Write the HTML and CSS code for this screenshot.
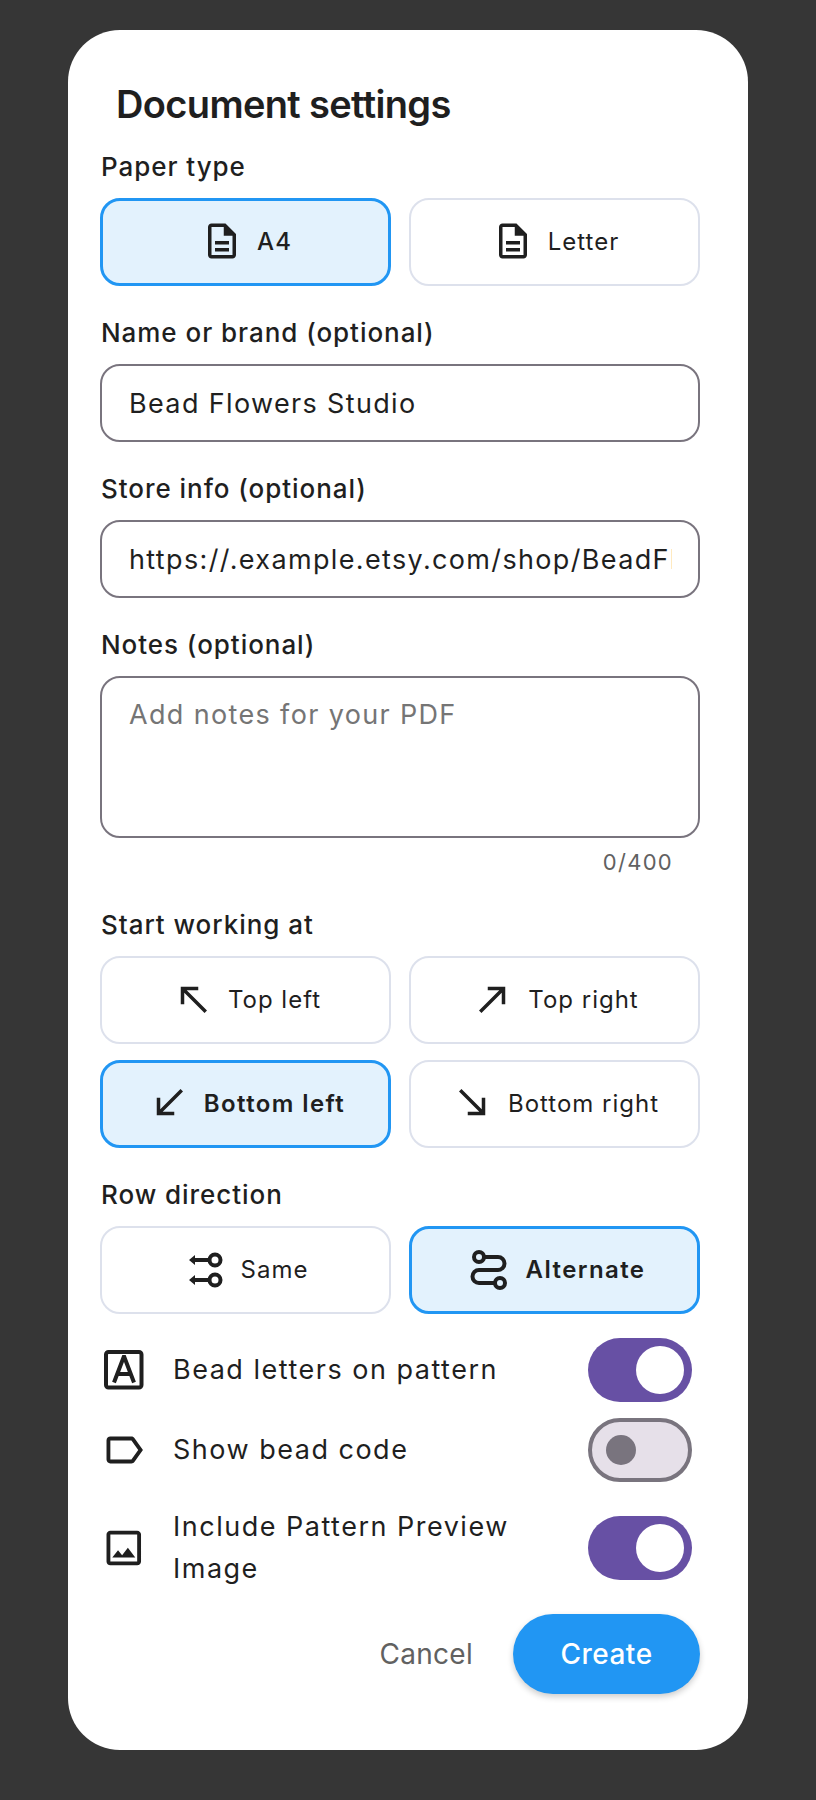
FILE: index.html
```html
<!DOCTYPE html>
<html lang="en">
<head>
    <meta charset="UTF-8">
    <meta name="viewport" content="width=device-width, initial-scale=1.0">
    <title>Document settings</title>
    <link rel="stylesheet" href="styles.css">
</head>
<body>
    <div class="dialog">
        <h2 class="dialog-title">Document settings</h2>

        <div class="section section-first">
            <div class="label">Paper type</div>
            <div class="choices">
                <button class="choice selected plain-weight">
                    <svg class="icon" viewBox="0 0 24 24"><path d="M8 16h8v2H8zm0-4h8v2H8zm6-10H6c-1.1 0-2 .9-2 2v16c0 1.1.89 2 1.99 2H18c1.1 0 2-.9 2-2V8l-6-6zm4 18H6V4h7v5h5v11z"/></svg>
                    <span>A4</span>
                </button>
                <button class="choice">
                    <svg class="icon" viewBox="0 0 24 24"><path d="M8 16h8v2H8zm0-4h8v2H8zm6-10H6c-1.1 0-2 .9-2 2v16c0 1.1.89 2 1.99 2H18c1.1 0 2-.9 2-2V8l-6-6zm4 18H6V4h7v5h5v11z"/></svg>
                    <span>Letter</span>
                </button>
            </div>
        </div>

        <div class="section">
            <div class="label">Name or brand (optional)</div>
            <input class="field" type="text" value="Bead Flowers Studio">
        </div>

        <div class="section">
            <div class="label">Store info (optional)</div>
            <input class="field" type="text" value="https://.example.etsy.com/shop/BeadFlowersStudio">
        </div>

        <div class="section">
            <div class="label">Notes (optional)</div>
            <textarea class="field notes" placeholder="Add notes for your PDF"></textarea>
            <div class="counter">0/400</div>
        </div>

        <div class="section">
            <div class="label">Start working at</div>
            <div class="choices">
                <button class="choice">
                    <svg class="icon" viewBox="0 0 24 24"><path d="M5 15h2V8.41L18.59 20 20 18.59 8.41 7H15V5H5v10z"/></svg>
                    <span>Top left</span>
                </button>
                <button class="choice">
                    <svg class="icon" viewBox="0 0 24 24"><path d="M9 5v2h6.59L4 18.59 5.41 20 17 8.41V15h2V5z"/></svg>
                    <span>Top right</span>
                </button>
                <button class="choice selected">
                    <svg class="icon" viewBox="0 0 24 24"><path d="M20 5.41 18.59 4 7 15.59V9H5v10h10v-2H8.41z"/></svg>
                    <span>Bottom left</span>
                </button>
                <button class="choice">
                    <svg class="icon" viewBox="0 0 24 24"><path d="M19 9h-2v6.59L5.41 4 4 5.41 15.59 17H9v2h10V9z"/></svg>
                    <span>Bottom right</span>
                </button>
            </div>
        </div>

        <div class="section">
            <div class="label">Row direction</div>
            <div class="choices">
                <button class="choice">
                    <svg class="icon" viewBox="0 0 42 42">
                        <path class="line" d="M8 12h16M8 32h16"/>
                        <path d="M4 12l6-5v10zM4 32l6-5v10z"/>
                        <circle class="line" cx="30" cy="12" r="5.500"/>
                        <circle class="line" cx="30" cy="32" r="5.500"/>
                    </svg>
                    <span>Same</span>
                </button>
                <button class="choice selected">
                    <svg class="icon icon-large" viewBox="0 0 46 46">
                        <path class="line" d="M18 11h14a6.500 6.500 0 0 1 0 13H13a6.500 6.500 0 0 0 0 13h16"/>
                        <circle class="line" cx="13" cy="11" r="5"/>
                        <circle class="line" cx="34" cy="37" r="5"/>
                    </svg>
                    <span>Alternate</span>
                </button>
            </div>
        </div>

        <div class="toggles">
            <div class="toggle-row">
                <svg class="row-icon" viewBox="0 0 46 46">
                    <rect class="line" x="6" y="5" width="35.500" height="35.500" rx="2.500"/>
                    <path class="line" d="M14 35.500L23.700 10h.6L34 35.500M17.500 27h13"/>
                </svg>
                <span class="toggle-text">Bead letters on pattern</span>
                <div class="switch on"><div class="thumb"></div></div>
            </div>
            <div class="toggle-row">
                <svg class="row-icon" viewBox="-0.4 0 24 24"><path d="M17.63 5.84C17.27 5.33 16.67 5 16 5L5 5.01C3.900 5.010 3 5.900 3 7v10c0 1.100.9 1.990 2 1.990L16 19c.67 0 1.270-.33 1.630-.84L22 12l-4.370-6.160zM16 17H5V7h11l3.550 5L16 17z"/></svg>
                <span class="toggle-text">Show bead code</span>
                <div class="switch"><div class="thumb"></div></div>
            </div>
            <div class="toggle-row toggle-row-tall">
                <svg class="row-icon" viewBox="-0.4 0 24 24"><path d="M19 5v14H5V5h14m0-2H5c-1.100 0-2 .9-2 2v14c0 1.100.9 2 2 2h14c1.100 0 2-.9 2-2V5c0-1.100-.9-2-2-2zm-4.860 8.860l-3 3.870L9 13.140 6 17h12l-3.860-5.140z"/></svg>
                <span class="toggle-text">Include Pattern Preview Image</span>
                <div class="switch on"><div class="thumb"></div></div>
            </div>
        </div>

        <div class="actions">
            <button class="cancel-btn">Cancel</button>
            <button class="create-btn">Create</button>
        </div>
    </div>
</body>
</html>
```

FILE: styles.css
```css
* {
    margin: 0;
    padding: 0;
    box-sizing: border-box;
    font-family: 'Inter', sans-serif;
}

body {
    background: #363636;
    height: 1800px;
    padding: 30px 68px;
}

.dialog {
    background: white;
    width: 680px;
    height: 1720px;
    border-radius: 52px;
    padding: 50px 48px 0 32px;
    color: #1f1f1f;
}

.dialog-title {
    font-size: 38px;
    font-weight: 600;
    line-height: 48px;
    letter-spacing: -0.65px;
    padding-left: 16px;
}

.section {
    margin-top: 31px;
}

.section-first {
    margin-top: 23px;
}

.label {
    font-size: 26px;
    font-weight: 500;
    line-height: 32px;
    letter-spacing: 0.95px;
    margin-bottom: 15px;
    padding-left: 1px;
}

.choices {
    display: grid;
    grid-template-columns: 291px 291px;
    column-gap: 18px;
    row-gap: 16px;
}

.choice {
    height: 88px;
    background: white;
    border: 2px solid #dde1ec;
    border-radius: 20px;
    display: flex;
    justify-content: center;
    align-items: center;
    gap: 14px;
    font-size: 24px;
    letter-spacing: 1px;
    color: #1f1f1f;
    padding: 0 0 2px 2px;
}

.choice.selected {
    background: #e3f2fd;
    border: 3px solid #2196f3;
    font-weight: 600;
    letter-spacing: 1.4px;
}

.choice.plain-weight {
    font-weight: 500;
    letter-spacing: 1px;
}

.icon {
    width: 42px;
    height: 42px;
    fill: #1f1f1f;
    flex-shrink: 0;
}

.icon-large {
    width: 46px;
    height: 46px;
}

.line {
    fill: none;
    stroke: #1f1f1f;
    stroke-width: 4;
}

.field {
    display: block;
    width: 100%;
    height: 78px;
    border: 2px solid #79747e;
    border-radius: 20px;
    padding: 0 26px 0 27px;
    font-size: 27px;
    letter-spacing: 1.35px;
    color: #1f1f1f;
    background: white;
    outline: none;
}

.notes {
    height: 162px;
    padding: 20px 26px 20px 27px;
    line-height: 34px;
    resize: none;
}

.notes::placeholder {
    color: #757575;
}

.counter {
    text-align: right;
    font-size: 22px;
    line-height: 32px;
    letter-spacing: 1.3px;
    color: #616161;
    margin-top: 8px;
    padding-right: 27px;
}

.toggles {
    margin-top: 24px;
    display: flex;
    flex-direction: column;
    gap: 16px;
}

.toggle-row {
    display: flex;
    align-items: center;
    padding-right: 8px;
}

.toggle-row-tall {
    margin-top: 8px;
}

.row-icon {
    width: 46px;
    height: 46px;
    fill: #1f1f1f;
    flex-shrink: 0;
    margin-right: 27px;
}

.toggle-text {
    flex: 1;
    font-size: 27px;
    line-height: 42px;
    letter-spacing: 1.5px;
    padding-right: 40px;
}

.switch {
    width: 104px;
    height: 64px;
    border-radius: 32px;
    background: #e6e0e9;
    border: 4px solid #79747e;
    display: flex;
    align-items: center;
    padding-left: 14px;
    flex-shrink: 0;
}

.switch .thumb {
    width: 30px;
    height: 30px;
    border-radius: 50%;
    background: #79747e;
}

.switch.on {
    background: #6750a4;
    border: none;
    justify-content: flex-end;
    padding: 0 8px 0 0;
}

.switch.on .thumb {
    width: 48px;
    height: 48px;
    background: white;
}

.actions {
    margin-top: 24px;
    display: flex;
    justify-content: flex-end;
    align-items: center;
    gap: 40px;
}

.cancel-btn {
    background: none;
    border: none;
    font-size: 28px;
    letter-spacing: 0.3px;
    color: #616161;
}

.create-btn {
    width: 187px;
    height: 80px;
    border: none;
    border-radius: 40px;
    background: #2196f3;
    color: white;
    font-size: 28px;
    font-weight: 500;
    letter-spacing: 0.5px;
    box-shadow: 0 3px 6px rgba(0, 0, 0, 0.2);
}
```
